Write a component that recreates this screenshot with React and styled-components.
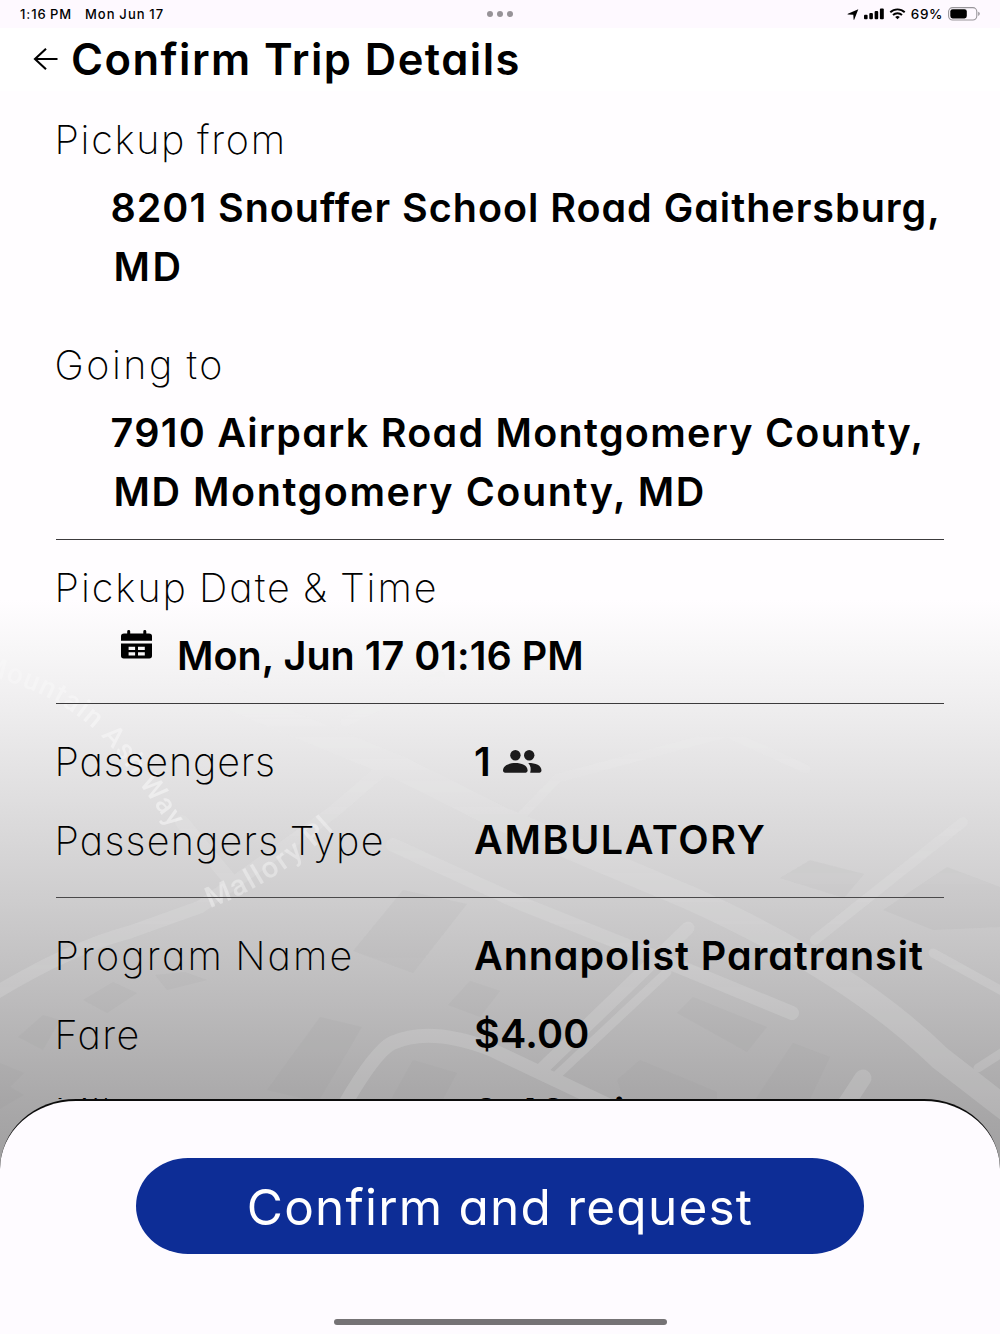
import React from 'react';
import styled, { createGlobalStyle } from 'styled-components';

const GlobalStyle = createGlobalStyle`
    * {
        box-sizing: border-box;
    }
    body {
        margin: 0;
        color: #000;
        font-family: "Inter", "Liberation Sans", sans-serif;
        font-feature-settings: "cv11";
    }
`;

const Screen = styled.div`
    position: relative;
    display: flex;
    flex-direction: column;
    width: 1000px;
    height: 1334px;
    overflow: hidden;
    background: linear-gradient(
        #fffdff 0,
        #fffdff 600px,
        #f8f7f8 645px,
        #eeedee 710px,
        #dfdedf 800px,
        #cecdce 900px,
        #bcbbbc 1000px,
        #aaa9aa 1100px,
        #9f9e9f 1170px
    );
`;

const MapLayer = styled.svg`
    position: absolute;
    top: 0;
    left: 0;
    width: 1000px;
    height: 1334px;
    mask-image: linear-gradient(transparent 600px, rgba(0, 0, 0, 0.7) 720px, #000 1000px);
    text {
        font-family: "Roboto", sans-serif;
        font-weight: 500;
    }
`;

const StatusBar = styled.div`
    position: relative;
    display: grid;
    grid-template-columns: 1fr auto 1fr;
    align-items: center;
    height: 28px;
    padding: 0 20px;
    background: #fef9ff;
    font-size: 13px;
    font-weight: 450;
`;

const StatusLeft = styled.div`
    display: flex;
    gap: 13px;
`;

const StatusText = styled.span`
    letter-spacing: ${(p) => p.$track}px;
    word-spacing: -1px;
    white-space: nowrap;
`;

const Dots = styled.div`
    display: flex;
    gap: 4px;
    span {
        width: 6px;
        height: 6px;
        border-radius: 50%;
        background: #979398;
    }
`;

const StatusRight = styled.div`
    display: flex;
    align-items: center;
    justify-content: flex-end;
    gap: 5px;
    font-size: 13.5px;
    svg {
        display: block;
    }
`;

const Header = styled.div`
    position: relative;
    display: flex;
    align-items: center;
    height: 63px;
    padding: 0 32px 2px;
    background: #ffffff;
    svg {
        display: block;
    }
`;

const Title = styled.h1`
    margin: 0 0 0 12px;
    font-size: 43.5px;
    line-height: 62px;
    font-weight: 600;
    letter-spacing: 1.45px;
    white-space: nowrap;
`;

const Content = styled.div`
    position: relative;
    flex: none;
    display: flex;
    flex-direction: column;
    height: 1008px;
    overflow: hidden;
    padding: 20px 56px 0 54.5px;
`;

const Label = styled.div`
    flex: none;
    width: ${(p) => (p.$column ? '419.5px' : 'auto')};
    font-size: 39.5px;
    line-height: 58px;
    font-weight: 250;
    letter-spacing: ${(p) => p.$track}px;
    word-spacing: -2px;
    white-space: nowrap;
`;

const Value = styled.div`
    font-size: 39.5px;
    line-height: 58.5px;
    font-weight: 600;
    letter-spacing: ${(p) => p.$track}px;
    white-space: nowrap;
`;

const Address = styled.div`
    margin: 10px 0 ${(p) => p.$after}px 56px;
    ${Value} + ${Value} {
        margin-left: 3px;
    }
`;

const DateSection = styled.div`
    padding: 19px 0 18px;
`;

const DateRow = styled.div`
    display: flex;
    height: 58px;
    margin: 9.5px 0 0 66.5px;
    svg {
        flex: none;
        margin: 3px 24px 0 0;
    }
`;

const Divider = styled.div`
    flex: none;
    height: 1.5px;
    margin-left: 1.5px;
    background: ${(p) => p.$color || '#3c3b3c'};
`;

const Rows = styled.div`
    padding: ${(p) => p.$top}px 0 17px;
`;

const Row = styled.div`
    display: flex;
    align-items: center;
    height: 78.5px;
    svg {
        margin: -1px 0 0 12px;
    }
`;

const Sheet = styled.div`
    position: relative;
    display: flex;
    flex: 1;
    flex-direction: column;
    align-items: center;
    padding-top: 57px;
    border-top: 2px solid #0c0c0c;
    border-radius: 76px 76px 0 0 / 70px 70px 0 0;
    background: #fefbff;
`;

const ConfirmButton = styled.button`
    width: 728px;
    height: 96px;
    padding: 2px 0 0;
    border: 0;
    border-radius: 52px / 48px;
    background: #0d2d96;
    color: #fff;
    font-family: inherit;
    font-feature-settings: inherit;
    font-size: 49.5px;
    line-height: 94px;
    font-weight: 400;
    letter-spacing: 1.22px;
`;

const HomeIndicator = styled.div`
    width: 333px;
    height: 6px;
    margin-top: auto;
    margin-bottom: 9px;
    border-radius: 3px;
    background: #757375;
`;

const BackIcon = () => (
    <svg width="27" height="26" viewBox="0 0 27 26" fill="none" stroke="#000" strokeWidth="2.1">
        <path d="M25.5 13H3M14 2.8 3 13l11 10.2" />
    </svg>
);

const CalendarIcon = () => (
    <svg width="32" height="29" viewBox="0 0 32 29">
        <path d="M0 10.8V6.3Q0 3.5 3 3.5h3.2V1.4Q6.2 0 7.7 0t1.5 1.4v2.1h13.1V1.4Q22.3 0 23.8 0t1.5 1.4v2.1H28q3 0 3 2.8v4.5z" />
        <path
            fillRule="evenodd"
            d="M0 13.5h31v12.3q0 2.7-2.7 2.7H2.7Q0 28.5 0 25.8zM7.6 16.7v3.2h6.5v-3.2zM17 16.7v3.2h6.8v-3.2zM7.6 22.2v3.2h6.5v-3.2zM17 22.2v3.2h6.8v-3.2z"
        />
    </svg>
);

const PeopleIcon = () => (
    <svg width="39" height="24" viewBox="0 0 39 24" fill="#1c1b1c">
        <circle cx="12.4" cy="5.3" r="5.2" />
        <circle cx="26.2" cy="5.3" r="5.2" />
        <path d="M0 20.6C0 15.2 6.5 13.1 12.4 13.1s12.2 2.1 12.2 7.5q0 2.1-1.9 2.1H1.9Q0 22.7 0 20.6z" />
        <path d="M25.3 13.1c7.5 0 13.2 2.3 13.2 7.5q0 2.1-1.9 2.1H27.2c1-3.8.6-6.8-1.9-9.6z" />
    </svg>
);

const LocationIcon = () => (
    <svg width="12" height="11" viewBox="0 0 12 11">
        <path d="M11.3.3 7.3 10.6q-.4.6-.7-.1L6.3 5.7 1 5.5q-.8-.2-.1-.7z" />
    </svg>
);

const SignalIcon = () => (
    <svg width="20" height="12" viewBox="0 0 20 12">
        <rect x="0" y="6.8" width="3.6" height="4.5" rx="1" />
        <rect x="5.3" y="5" width="3.6" height="6.3" rx="1" />
        <rect x="10.6" y="3" width="3.6" height="8.3" rx="1" />
        <rect x="15.9" y="0.5" width="3.9" height="10.8" rx="1" />
    </svg>
);

const WifiIcon = () => (
    <svg width="17" height="12" viewBox="0 0 16 12" fill="none" stroke="#000" strokeWidth="1.9">
        <path d="M.8 4.3a10.3 10.3 0 0 1 14.4 0" />
        <path d="M3.5 7a6.6 6.6 0 0 1 9 0" />
        <path d="M8 11.3 5.7 9.1a3.5 3.5 0 0 1 4.6 0z" fill="#000" stroke="none" />
    </svg>
);

const BatteryIcon = () => (
    <svg width="32" height="14" viewBox="0 0 32 14">
        <rect x=".6" y=".6" width="28.2" height="12.4" rx="4" fill="none" stroke="#98959a" strokeWidth="1.1" />
        <rect x="2.3" y="2.2" width="16.5" height="9.2" rx="2.3" />
        <path d="M30.2 4.7q1.6.6 1.6 2.1t-1.6 2.1z" fill="#98959a" />
    </svg>
);

// Faded street map behind the trip details
const StreetMap = () => (
    <MapLayer viewBox="0 0 1000 1334">
        <g fill="#8d9290" opacity="0.08">
            <path d="M677 1013l16-16 74 30-20 25zM617 1080l23-20 77 32v16h-90zM793 1043l37 14-23 48-54-2z" />
            <path d="M320 1017l42 10-44 75-51-12zM413 1060l44 13-16 30h-52zM113 982l24 11-30 20-24-13z" />
            <path d="M403 890l64 14-54 69-60-22zM43 1015l17 5-17 30-25-13zM0 1063l24 10-14 14 14 8-24 14z" />
            <path d="M947 867l53 20v40l-67 3-50-20zM810 860l54 14-20 24-64-20zM155 975l30-3 22 8-40 10z" />
            <path d="M470 981l30 10-20 26-32-12z" />
        </g>
        <g fill="none" stroke="#f0f3f2" strokeLinecap="round" strokeLinejoin="round" opacity="0.17">
            <path d="M210 690L400 768L500 818L690 898Q850 970 940 1058L1010 1112" strokeWidth="24" />
            <path d="M393 845L520 903L680 967L792 1013" strokeWidth="14" />
            <path d="M522 815L558 778L727 733L806 769" strokeWidth="9" />
            <path d="M-6 994Q70 948 130 932L200 907L333 812L382 770" strokeWidth="13" />
            <path d="M345 722L440 676" strokeWidth="10" />
            <path d="M963 822L815 940" strokeWidth="10" />
            <path d="M688 928L543 1068" strokeWidth="13" />
            <path d="M667 972L556 1076" strokeWidth="9" />
            <path d="M345 1104Q375 1052 392 1043Q430 1026 490 1049L606 1104" strokeWidth="14" />
            <path d="M863 1078L842 1110" strokeWidth="17" />
            <path d="M933 953L1004 992M978 1068L1006 1050" strokeWidth="9" />
            <path d="M182 822L230 880" strokeWidth="14" />
        </g>
        <defs>
            <path id="ashWay" d="M-20 674Q72 694 120 758T206 880" />
            <path id="malloryPl" d="M210 908Q290 880 372 792" />
        </defs>
        <text fontSize="28" letterSpacing="1.3" fill="#fff" opacity="0.55">
            <textPath href="#ashWay">Mountain Ash Way</textPath>
        </text>
        <text fontSize="29" letterSpacing="2" fill="#fff" opacity="0.4">
            <textPath href="#malloryPl">Mallory Pl</textPath>
        </text>
    </MapLayer>
);

const tripRows = [
    { label: 'Passengers', labelTrack: 0.85, value: '1', valueTrack: 0, icon: true },
    { label: 'Passengers Type', labelTrack: 1.2, value: 'AMBULATORY', valueTrack: 1.65 },
];

const programRows = [
    { label: 'Program Name', labelTrack: 2.15, value: 'Annapolist Paratransit', valueTrack: 0.92 },
    { label: 'Fare', labelTrack: 1.4, value: '$4.00', valueTrack: 0.25 },
    { label: 'Miles', labelTrack: 1.3, value: '2.40 mi', valueTrack: 0.8 },
];

const DetailRow = ({ label, labelTrack, value, valueTrack, icon }) => (
    <Row>
        <Label $column $track={labelTrack}>{label}</Label>
        <Value $track={valueTrack}>{value}</Value>
        {icon && <PeopleIcon />}
    </Row>
);

const App = () => (
    <>
        <GlobalStyle />
        <Screen>
            <StreetMap />
            <StatusBar>
                <StatusLeft>
                    <StatusText $track={0.9}>1:16 PM</StatusText>
                    <StatusText $track={1.1}>Mon Jun 17</StatusText>
                </StatusLeft>
                <Dots>
                    <span />
                    <span />
                    <span />
                </Dots>
                <StatusRight>
                    <LocationIcon />
                    <SignalIcon />
                    <WifiIcon />
                    <StatusText $track={0.6}>69%</StatusText>
                    <BatteryIcon />
                </StatusRight>
            </StatusBar>
            <Header>
                <BackIcon />
                <Title>Confirm Trip Details</Title>
            </Header>
            <Content>
                <Label $track={1.7}>Pickup from</Label>
                <Address $after={40}>
                    <Value $track={0.98}>8201 Snouffer School Road Gaithersburg,</Value>
                    <Value $track={2.5}>MD</Value>
                </Address>
                <Label $track={2.5}>Going to</Label>
                <Address $after={17.7}>
                    <Value $track={1.27}>7910 Airpark Road Montgomery County,</Value>
                    <Value $track={1.56}>MD Montgomery County, MD</Value>
                </Address>
                <Divider />
                <DateSection>
                    <Label $track={2}>Pickup Date &amp; Time</Label>
                    <DateRow>
                        <CalendarIcon />
                        <Value $track={0.02}>Mon, Jun 17 01:16 PM</Value>
                    </DateRow>
                </DateSection>
                <Divider />
                <Rows $top={18.8}>
                    {tripRows.map((row) => (
                        <DetailRow key={row.label} {...row} />
                    ))}
                </Rows>
                <Divider $color="#4a494a" />
                <Rows $top={18.5}>
                    {programRows.map((row) => (
                        <DetailRow key={row.label} {...row} />
                    ))}
                </Rows>
            </Content>
            <Sheet>
                <ConfirmButton>Confirm and request</ConfirmButton>
                <HomeIndicator />
            </Sheet>
        </Screen>
    </>
);

export default App;
